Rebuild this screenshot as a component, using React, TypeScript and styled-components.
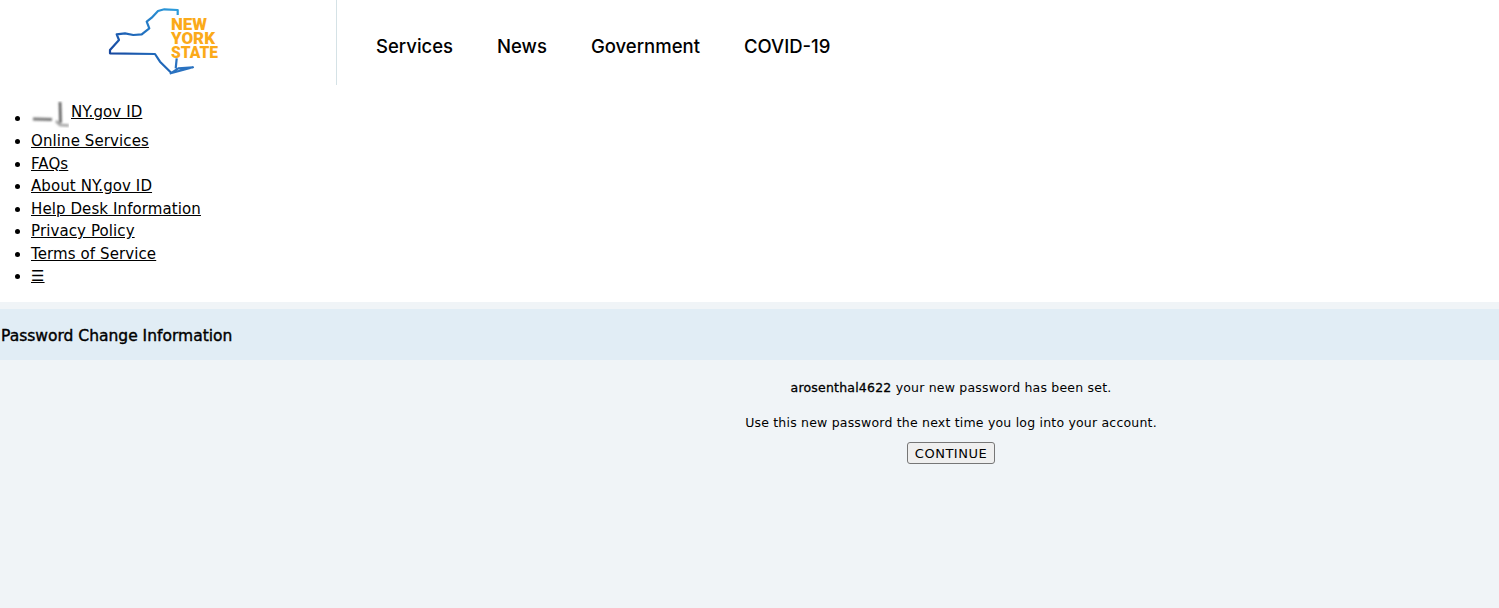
import styled, { createGlobalStyle } from "styled-components";

const GlobalStyle = createGlobalStyle`
  html, body {
    margin: 0;
    padding: 0;
    background: #fff;
  }
  body {
    font-family: "DejaVu Sans", Verdana, sans-serif;
    color: #000;
  }
`;

const Page = styled.div`
  width: 1499px;
  height: 608px;
  overflow: hidden;
  display: flex;
  flex-direction: column;
`;

const Header = styled.header`
  display: flex;
  align-items: stretch;
  height: 85px;
`;

const LogoCell = styled.a`
  width: 336px;
  display: flex;
  align-items: flex-start;
  justify-content: center;
  border-right: 1px solid #d5e2e6;
`;

const MainNav = styled.nav`
  display: flex;
  align-items: center;
  gap: 44px;
  padding: 7px 0 0 39px;
`;

const MainNavLink = styled.a`
  font-family: Inter, "Open Sans", sans-serif;
  font-size: 18.5px;
  font-weight: 500;
  color: #000;
`;

const SideList = styled.ul`
  margin: 0;
  padding: 16px 0 14px 31px;
  font-size: 15px;
  line-height: 22.5px;
  letter-spacing: 0.1px;
`;

const SideItem = styled.li``;

const SideLink = styled.a<{ $raised?: boolean }>`
  color: #000;
  text-decoration: underline;
  vertical-align: ${(p) => (p.$raised ? "6px" : "baseline")};
`;

const BadgeIcon = styled.svg`
  width: 38px;
  height: 29px;
  margin-right: 2px;
  vertical-align: -7px;
`;

const Content = styled.main`
  flex: 1;
  background: #f0f4f7;
  padding-top: 7px;
`;

const TitleBar = styled.div`
  height: 51px;
  display: flex;
  align-items: center;
  background: #e1edf5;
  padding: 3px 0 0 1px;
  box-sizing: border-box;
`;

const Title = styled.h1`
  margin: 0;
  font-size: 15.5px;
  font-weight: 400;
  -webkit-text-stroke: 0.4px #000;
`;

const Message = styled.section`
  padding: 20px 0 0 403px;
  text-align: center;
  font-size: 12.5px;
  letter-spacing: 0.2px;
`;

const MessageLine = styled.p`
  margin: 0 0 20px;
  line-height: 15px;
`;

const UserName = styled.span`
  -webkit-text-stroke: 0.3px #000;
`;

const ContinueButton = styled.button`
  display: block;
  margin: -8px auto 0;
  width: 88px;
  height: 22px;
  padding: 1px 0 0;
  font-family: inherit;
  font-size: 13px;
  letter-spacing: 0.5px;
  color: #000;
  background: #efefef;
  border: 1px solid #767676;
  border-radius: 3px;
`;

const links = [
  "Online Services",
  "FAQs",
  "About NY.gov ID",
  "Help Desk Information",
  "Privacy Policy",
  "Terms of Service",
  "☰",
];

const NyLogo = () => (
  <svg width="150" height="85" viewBox="93 0 150 85">
    <defs>
      <linearGradient id="stateStroke" x1="1" y1="0" x2="0" y2="1">
        <stop offset="0" stopColor="#2d9ddc" />
        <stop offset="0.55" stopColor="#1f66b8" />
        <stop offset="0.85" stopColor="#17479e" />
      </linearGradient>
    </defs>
    <path
      d="M177.700 15 L177.700 10 L164.300 9.300 L158 11 L151.700 17.700 L146.700 21.700 L149.300 28.300 L141.700 34.300 L133.300 35 L125 33.300 L116.700 34.300 L119 40 L110 50 L110 53.300 L155 54 L160 61.700 L171.700 73.300"
      fill="none"
      stroke="url(#stateStroke)"
      strokeWidth="2.200"
      strokeLinejoin="round"
    />
    <path
      d="M176.700 58.300 L175.700 68.300 M170.700 73.300 L193 67.300 L178.300 68.300 Z"
      fill="none"
      stroke="#2a72c0"
      strokeWidth="2.200"
      strokeLinejoin="round"
    />
    <g fill="#fbaa19" fontFamily="Roboto, sans-serif" fontWeight="900" fontSize="16">
      <text x="171" y="30" textLength="36" lengthAdjust="spacingAndGlyphs">NEW</text>
      <text x="171" y="44" textLength="44" lengthAdjust="spacingAndGlyphs">YORK</text>
      <text x="171" y="58" textLength="47" lengthAdjust="spacingAndGlyphs">STATE</text>
    </g>
  </svg>
);

const App = () => (
  <Page>
    <GlobalStyle />
    <Header>
      <LogoCell>
        <NyLogo />
      </LogoCell>
      <MainNav>
        <MainNavLink>Services</MainNavLink>
        <MainNavLink>News</MainNavLink>
        <MainNavLink>Government</MainNavLink>
        <MainNavLink>COVID-19</MainNavLink>
      </MainNav>
    </Header>
    <SideList>
      <SideItem>
        <BadgeIcon viewBox="0 0 38 29">
          <defs>
            <filter id="soft">
              <feGaussianBlur stdDeviation="1" />
            </filter>
          </defs>
          <g filter="url(#soft)" fill="none" strokeWidth="2.500">
            <path d="M2 18 L21 18.500" stroke="#777" strokeWidth="3" />
            <path d="M29 1 L29.500 22" stroke="#555" />
            <path d="M25 20 L29 24 L38 24.500" stroke="#a0a0a0" />
          </g>
        </BadgeIcon>
        <SideLink $raised>NY.gov ID</SideLink>
      </SideItem>
      {links.map((link) => (
        <SideItem key={link}>
          <SideLink>{link}</SideLink>
        </SideItem>
      ))}
    </SideList>
    <Content>
      <TitleBar>
        <Title>Password Change Information</Title>
      </TitleBar>
      <Message>
        <MessageLine>
          <UserName>arosenthal4622</UserName> your new password has been set.
        </MessageLine>
        <MessageLine>Use this new password the next time you log into your account.</MessageLine>
        <ContinueButton>CONTINUE</ContinueButton>
      </Message>
    </Content>
  </Page>
);

export default App;
